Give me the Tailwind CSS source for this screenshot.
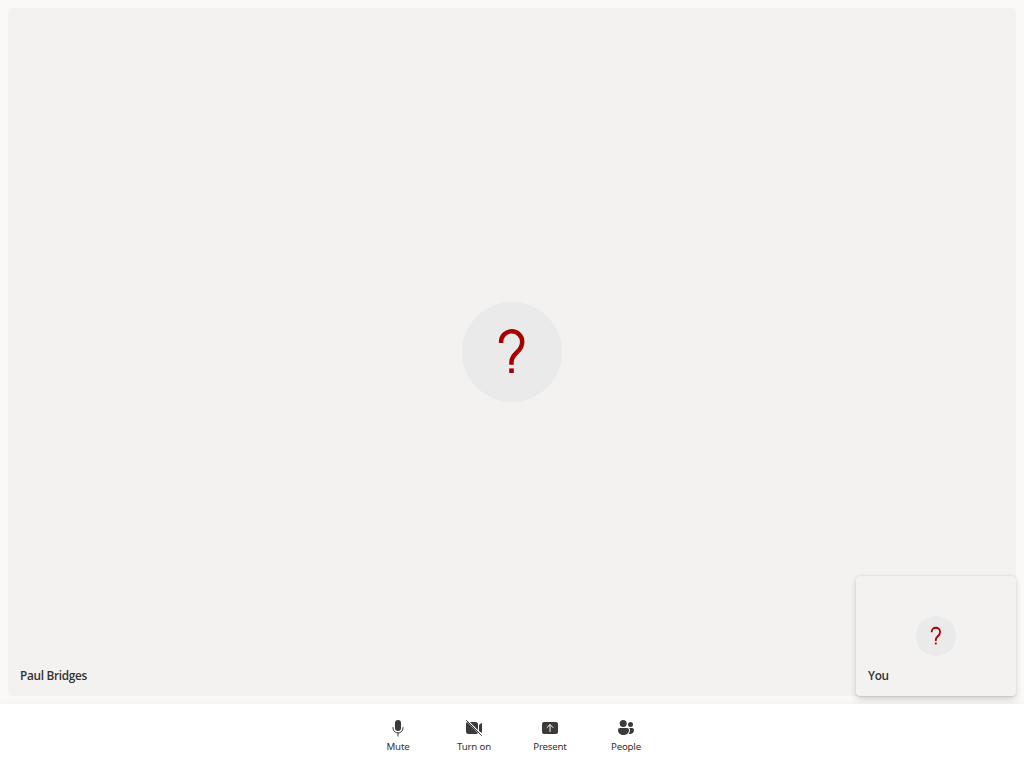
<!DOCTYPE html>
<html lang="en">
<head>
<meta charset="utf-8">
<title>Call</title>
<script src="https://cdn.jsdelivr.net/npm/@tailwindcss/browser@4"></script>
</head>
<body class="h-screen overflow-hidden bg-[#faf9f8] font-['Open_Sans','Noto_Sans',sans-serif] text-[#323130]">
<svg class="hidden"><symbol id="unknown" viewBox="0 0 100 100"><path d="M39.100 40.900V39.900A10.550 10.550 0 0 1 60.200 39.900C60.200 45 57.600 47.800 54.600 50.600C51.600 53.500 49.500 56 49.500 59.600V62.800" fill="none" stroke="#a80000" stroke-width="4.500"/><path d="M47.200 66.400h4.600v4.600h-4.600z" fill="#a80000"/></symbol></svg>
<div class="flex h-full flex-col">
  <main class="relative min-h-0 flex-1 p-2">
    <section class="flex h-full items-center justify-center rounded bg-[#f3f2f1]">
      <div class="size-[100px] rounded-full bg-[#eaeaea]"><svg class="size-full"><use href="#unknown"/></svg></div>
    </section>
    <span class="absolute bottom-[21px] left-5 text-[11.8px] leading-4 font-semibold tracking-[-0.3px]">Paul Bridges</span>
    <section class="absolute right-2 bottom-2 flex h-[120px] w-[160px] items-center justify-center rounded bg-[#f3f2f1] shadow-[0_0.6px_1.8px_rgba(0,0,0,0.108),0_3.2px_7.2px_rgba(0,0,0,0.132)]">
      <div class="size-10 rounded-full bg-[#eaeaea]"><svg class="size-full"><use href="#unknown"/></svg></div>
      <span class="absolute bottom-[13px] left-3 text-[11.8px] leading-4 font-semibold tracking-[-0.3px]">You</span>
    </section>
  </main>
  <footer class="relative z-10 flex h-16 justify-center gap-5 bg-white pt-[14px] font-['Noto_Sans',sans-serif] text-[9.7px] tracking-[-0.2px] shadow-[0_0_7px_rgba(0,0,0,0.05)]">
    <button class="flex w-14 flex-col items-center"><svg class="size-5" viewBox="0 0 20 20" fill="#3b3a39"><rect x="7" y="2" width="6" height="11" rx="3"/><path d="M5 9.5v.5a5 5 0 0 0 10 0v-.5M10 15v3" fill="none" stroke="#3b3a39" stroke-linecap="round"/></svg><span class="mt-0.5 leading-[14px] whitespace-nowrap">Mute</span></button>
    <button class="flex w-14 flex-col items-center"><svg class="size-5" viewBox="0 0 20 20" fill="#3b3a39"><path d="M3.1 4 14 14.9A2.5 2.5 0 0 1 11.5 16h-7A2.5 2.5 0 0 1 2 13.500v-7A2.5 2.5 0 0 1 3.1 4M5.800 4h5.700A2.500 2.500 0 0 1 14 6.500v5.700zM15 6.930l2.100-1.640a.6.6 0 0 1 .9.500v8.400a.6.6 0 0 1-.6.600L15 13.100z"/><path d="m2.500 2.500 15 15" stroke="#3b3a39" stroke-linecap="round"/></svg><span class="mt-0.5 leading-[14px] whitespace-nowrap">Turn on</span></button>
    <button class="flex w-14 flex-col items-center"><svg class="size-5" viewBox="0 0 20 20" fill="#3b3a39"><rect x="2" y="4" width="16" height="12" rx="2"/><path d="M10 13.500V6.800M7 9.500l3-3 3 3" fill="none" stroke="white" stroke-linecap="round" stroke-linejoin="round"/></svg><span class="mt-0.5 leading-[14px] whitespace-nowrap">Present</span></button>
    <button class="flex w-14 flex-col items-center"><svg class="size-5" viewBox="0 0 20 20" fill="#3b3a39"><circle cx="7.200" cy="5.500" r="3.500"/><circle cx="14.500" cy="6.500" r="2.500"/><path d="M4 10h7a2 2 0 0 1 2 2c0 3.500-2.500 5-5.500 5S2 15.500 2 12a2 2 0 0 1 2-2M13.200 10H16a2 2 0 0 1 2 2c0 2.700-1.800 4-4.200 4q-.6 0-1.200-.1Q14 14.300 14 12q0-1.200-.8-2"/></svg><span class="mt-0.5 leading-[14px] whitespace-nowrap">People</span></button>
  </footer>
</div>
</body>
</html>
